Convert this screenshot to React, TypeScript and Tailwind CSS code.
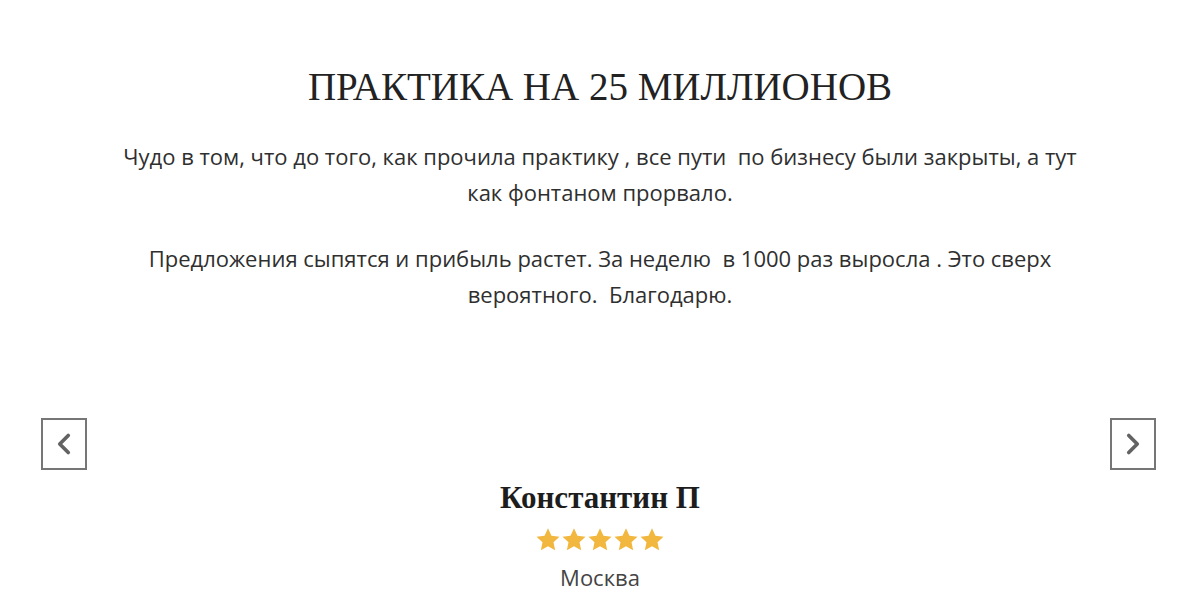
import { ChevronLeft, ChevronRight } from "lucide-react";

const Star = () => (
  <svg viewBox="0 0 24 24" className="w-[26px] h-[26px]" fill="#f2b73f">
    <path d="M12 1.2l3.2 6.8 7.4.9-5.5 5.1 1.5 7.4L12 17.7l-6.6 3.7 1.5-7.4-5.5-5.1 7.4-.9z" />
  </svg>
);

function NavButton({ dir }: { dir: "prev" | "next" }) {
  return (
    <button className="w-[46px] h-[52px] border-2 border-[#767676] flex items-center justify-center text-[#636363] bg-white">
      {dir === "prev" ? (
        <ChevronLeft className="w-[34px] h-[34px]" strokeWidth={2.6} />
      ) : (
        <ChevronRight className="w-[34px] h-[34px]" strokeWidth={2.6} />
      )}
    </button>
  );
}

export default function App() {
  return (
    <div className="min-h-[606px] w-full bg-white flex flex-col items-center font-['Open_Sans',sans-serif] text-[#2f2f2f]">
      <h1 className="mt-[62px] text-[39px] leading-[50px] text-[#222] font-['Liberation_Serif',serif]">
        ПРАКТИКА НА 25 МИЛЛИОНОВ
      </h1>

      <div className="mt-[26px] w-[1060px] text-center text-[22px] leading-[36px]">
        <p>
          Чудо в том, что до того, как прочила практику , все пути&nbsp; по бизнесу были закрыты, а тут
          <br />
          как фонтаном прорвало.
        </p>
        <p className="mt-[30px]">
          Предложения сыпятся и прибыль растет. За неделю&nbsp; в 1000 раз выросла . Это сверх
          <br />
          вероятного.&nbsp; Благодарю.
        </p>
      </div>

      <div className="mt-[106px] w-full pl-[41px] pr-[44px] flex justify-between">
        <NavButton dir="prev" />
        <NavButton dir="next" />
      </div>

      <div className="flex flex-col items-center mt-[8px]">
        <div className="text-[31px] leading-[40px] font-bold text-[#1d1d1d] font-['Liberation_Serif',serif]">
          Константин П
        </div>
        <div className="flex gap-[0px] mt-[9px]">
          <Star />
          <Star />
          <Star />
          <Star />
          <Star />
        </div>
        <div className="mt-[9px] text-[22px] leading-[30px] text-[#444]">Москва</div>
      </div>
    </div>
  );
}
